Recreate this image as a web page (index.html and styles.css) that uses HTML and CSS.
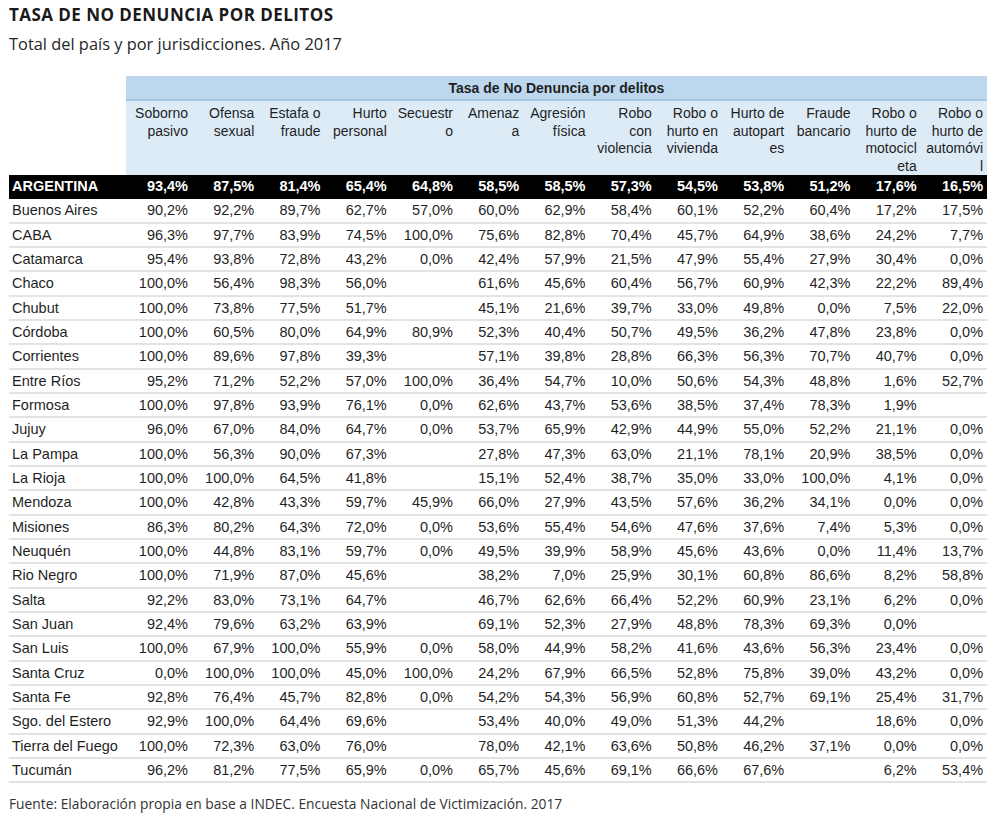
FILE: index.html
```html
<!DOCTYPE html>
<html lang="es">
<head>
<meta charset="utf-8">
<title>Tasa de no denuncia por delitos</title>
<link rel="stylesheet" href="styles.css">
</head>
<body>
<div class="page">
  <h1 class="title">TASA DE NO DENUNCIA POR DELITOS</h1>
  <p class="subtitle">Total del país y por jurisdicciones. Año 2017</p>
  <table class="data">
    <colgroup>
      <col class="c-label">
      <col class="c-num"><col class="c-num"><col class="c-num"><col class="c-num"><col class="c-num">
      <col class="c-num"><col class="c-num"><col class="c-num"><col class="c-num"><col class="c-num">
      <col class="c-num"><col class="c-num"><col class="c-num">
    </colgroup>
    <thead>
      <tr class="band">
        <th class="blank"></th>
        <th colspan="13" class="band-title">Tasa de No Denuncia por delitos</th>
      </tr>
      <tr class="cols">
        <th class="blank"></th>
        <th>Soborno<br>pasivo</th>
        <th>Ofensa<br>sexual</th>
        <th>Estafa o<br>fraude</th>
        <th>Hurto<br>personal</th>
        <th>Secuestr<br>o</th>
        <th>Amenaz<br>a</th>
        <th>Agresión<br>física</th>
        <th>Robo<br>con<br>violencia</th>
        <th>Robo o<br>hurto en<br>vivienda</th>
        <th>Hurto de<br>autopart<br>es</th>
        <th>Fraude<br>bancario</th>
        <th>Robo o<br>hurto de<br>motocicl<br>eta</th>
        <th>Robo o<br>hurto de<br>automóvi<br>l</th>
      </tr>
    </thead>
    <tbody>
      <tr class="total"><td>ARGENTINA</td><td>93,4%</td><td>87,5%</td><td>81,4%</td><td>65,4%</td><td>64,8%</td><td>58,5%</td><td>58,5%</td><td>57,3%</td><td>54,5%</td><td>53,8%</td><td>51,2%</td><td>17,6%</td><td>16,5%</td></tr>
      <tr><td>Buenos Aires</td><td>90,2%</td><td>92,2%</td><td>89,7%</td><td>62,7%</td><td>57,0%</td><td>60,0%</td><td>62,9%</td><td>58,4%</td><td>60,1%</td><td>52,2%</td><td>60,4%</td><td>17,2%</td><td>17,5%</td></tr>
      <tr><td>CABA</td><td>96,3%</td><td>97,7%</td><td>83,9%</td><td>74,5%</td><td>100,0%</td><td>75,6%</td><td>82,8%</td><td>70,4%</td><td>45,7%</td><td>64,9%</td><td>38,6%</td><td>24,2%</td><td>7,7%</td></tr>
      <tr><td>Catamarca</td><td>95,4%</td><td>93,8%</td><td>72,8%</td><td>43,2%</td><td>0,0%</td><td>42,4%</td><td>57,9%</td><td>21,5%</td><td>47,9%</td><td>55,4%</td><td>27,9%</td><td>30,4%</td><td>0,0%</td></tr>
      <tr><td>Chaco</td><td>100,0%</td><td>56,4%</td><td>98,3%</td><td>56,0%</td><td></td><td>61,6%</td><td>45,6%</td><td>60,4%</td><td>56,7%</td><td>60,9%</td><td>42,3%</td><td>22,2%</td><td>89,4%</td></tr>
      <tr><td>Chubut</td><td>100,0%</td><td>73,8%</td><td>77,5%</td><td>51,7%</td><td></td><td>45,1%</td><td>21,6%</td><td>39,7%</td><td>33,0%</td><td>49,8%</td><td>0,0%</td><td>7,5%</td><td>22,0%</td></tr>
      <tr><td>Córdoba</td><td>100,0%</td><td>60,5%</td><td>80,0%</td><td>64,9%</td><td>80,9%</td><td>52,3%</td><td>40,4%</td><td>50,7%</td><td>49,5%</td><td>36,2%</td><td>47,8%</td><td>23,8%</td><td>0,0%</td></tr>
      <tr><td>Corrientes</td><td>100,0%</td><td>89,6%</td><td>97,8%</td><td>39,3%</td><td></td><td>57,1%</td><td>39,8%</td><td>28,8%</td><td>66,3%</td><td>56,3%</td><td>70,7%</td><td>40,7%</td><td>0,0%</td></tr>
      <tr><td>Entre Ríos</td><td>95,2%</td><td>71,2%</td><td>52,2%</td><td>57,0%</td><td>100,0%</td><td>36,4%</td><td>54,7%</td><td>10,0%</td><td>50,6%</td><td>54,3%</td><td>48,8%</td><td>1,6%</td><td>52,7%</td></tr>
      <tr><td>Formosa</td><td>100,0%</td><td>97,8%</td><td>93,9%</td><td>76,1%</td><td>0,0%</td><td>62,6%</td><td>43,7%</td><td>53,6%</td><td>38,5%</td><td>37,4%</td><td>78,3%</td><td>1,9%</td><td></td></tr>
      <tr><td>Jujuy</td><td>96,0%</td><td>67,0%</td><td>84,0%</td><td>64,7%</td><td>0,0%</td><td>53,7%</td><td>65,9%</td><td>42,9%</td><td>44,9%</td><td>55,0%</td><td>52,2%</td><td>21,1%</td><td>0,0%</td></tr>
      <tr><td>La Pampa</td><td>100,0%</td><td>56,3%</td><td>90,0%</td><td>67,3%</td><td></td><td>27,8%</td><td>47,3%</td><td>63,0%</td><td>21,1%</td><td>78,1%</td><td>20,9%</td><td>38,5%</td><td>0,0%</td></tr>
      <tr><td>La Rioja</td><td>100,0%</td><td>100,0%</td><td>64,5%</td><td>41,8%</td><td></td><td>15,1%</td><td>52,4%</td><td>38,7%</td><td>35,0%</td><td>33,0%</td><td>100,0%</td><td>4,1%</td><td>0,0%</td></tr>
      <tr><td>Mendoza</td><td>100,0%</td><td>42,8%</td><td>43,3%</td><td>59,7%</td><td>45,9%</td><td>66,0%</td><td>27,9%</td><td>43,5%</td><td>57,6%</td><td>36,2%</td><td>34,1%</td><td>0,0%</td><td>0,0%</td></tr>
      <tr><td>Misiones</td><td>86,3%</td><td>80,2%</td><td>64,3%</td><td>72,0%</td><td>0,0%</td><td>53,6%</td><td>55,4%</td><td>54,6%</td><td>47,6%</td><td>37,6%</td><td>7,4%</td><td>5,3%</td><td>0,0%</td></tr>
      <tr><td>Neuquén</td><td>100,0%</td><td>44,8%</td><td>83,1%</td><td>59,7%</td><td>0,0%</td><td>49,5%</td><td>39,9%</td><td>58,9%</td><td>45,6%</td><td>43,6%</td><td>0,0%</td><td>11,4%</td><td>13,7%</td></tr>
      <tr><td>Rio Negro</td><td>100,0%</td><td>71,9%</td><td>87,0%</td><td>45,6%</td><td></td><td>38,2%</td><td>7,0%</td><td>25,9%</td><td>30,1%</td><td>60,8%</td><td>86,6%</td><td>8,2%</td><td>58,8%</td></tr>
      <tr><td>Salta</td><td>92,2%</td><td>83,0%</td><td>73,1%</td><td>64,7%</td><td></td><td>46,7%</td><td>62,6%</td><td>66,4%</td><td>52,2%</td><td>60,9%</td><td>23,1%</td><td>6,2%</td><td>0,0%</td></tr>
      <tr><td>San Juan</td><td>92,4%</td><td>79,6%</td><td>63,2%</td><td>63,9%</td><td></td><td>69,1%</td><td>52,3%</td><td>27,9%</td><td>48,8%</td><td>78,3%</td><td>69,3%</td><td>0,0%</td><td></td></tr>
      <tr><td>San Luis</td><td>100,0%</td><td>67,9%</td><td>100,0%</td><td>55,9%</td><td>0,0%</td><td>58,0%</td><td>44,9%</td><td>58,2%</td><td>41,6%</td><td>43,6%</td><td>56,3%</td><td>23,4%</td><td>0,0%</td></tr>
      <tr><td>Santa Cruz</td><td>0,0%</td><td>100,0%</td><td>100,0%</td><td>45,0%</td><td>100,0%</td><td>24,2%</td><td>67,9%</td><td>66,5%</td><td>52,8%</td><td>75,8%</td><td>39,0%</td><td>43,2%</td><td>0,0%</td></tr>
      <tr><td>Santa Fe</td><td>92,8%</td><td>76,4%</td><td>45,7%</td><td>82,8%</td><td>0,0%</td><td>54,2%</td><td>54,3%</td><td>56,9%</td><td>60,8%</td><td>52,7%</td><td>69,1%</td><td>25,4%</td><td>31,7%</td></tr>
      <tr><td>Sgo. del Estero</td><td>92,9%</td><td>100,0%</td><td>64,4%</td><td>69,6%</td><td></td><td>53,4%</td><td>40,0%</td><td>49,0%</td><td>51,3%</td><td>44,2%</td><td></td><td>18,6%</td><td>0,0%</td></tr>
      <tr><td>Tierra del Fuego</td><td>100,0%</td><td>72,3%</td><td>63,0%</td><td>76,0%</td><td></td><td>78,0%</td><td>42,1%</td><td>63,6%</td><td>50,8%</td><td>46,2%</td><td>37,1%</td><td>0,0%</td><td>0,0%</td></tr>
      <tr><td>Tucumán</td><td>96,2%</td><td>81,2%</td><td>77,5%</td><td>65,9%</td><td>0,0%</td><td>65,7%</td><td>45,6%</td><td>69,1%</td><td>66,6%</td><td>67,6%</td><td></td><td>6,2%</td><td>53,4%</td></tr>
    </tbody>
  </table>
  <p class="source">Fuente: Elaboración propia en base a INDEC. Encuesta Nacional de Victimización. 2017</p>
</div>
</body>
</html>
```

FILE: styles.css
```css
html, body {
  margin: 0;
  padding: 0;
  background: #ffffff;
}

.page {
  padding: 5px 0 0 9px;
  width: 978px;
}

.title {
  margin: 0;
  font-family: "Open Sans", "Liberation Sans", sans-serif;
  font-weight: 700;
  font-size: 17px;
  letter-spacing: 0.45px;
  line-height: 20px;
  color: #1a1a1a;
}

.subtitle {
  margin: 8px 0 0 0;
  font-family: "Open Sans", "Liberation Sans", sans-serif;
  font-size: 16.4px;
  line-height: 22px;
  color: #262626;
}

.data {
  margin-top: 21px;
  width: 978px;
  table-layout: fixed;
  border-collapse: separate;
  border-spacing: 0;
  font-family: "Liberation Sans", Arial, sans-serif;
  color: #1f1f1f;
}

.c-label { width: 116.75px; }
.c-num { width: 66.25px; }

.data th {
  font-weight: 400;
  font-size: 14px;
  padding: 0 4px 0 0;
  text-align: right;
}

.data th.blank {
  background: #ffffff;
}

.band th.band-title {
  background: #bdd7ee;
  font-weight: 700;
  text-align: center;
  height: 25px;
  box-sizing: border-box;
  border-bottom: 2px solid #a6c8e8;
  line-height: 18px;
  padding: 0;
}

.band th.blank {
  border-bottom: 2px solid #ffffff;
}

.cols th {
  background: #ddebf7;
  vertical-align: top;
  line-height: 17.5px;
  height: 72px;
  box-sizing: border-box;
  padding-top: 4px;
}

.data td {
  font-size: 14.5px;
  height: 24.33px;
  box-sizing: border-box;
  padding: 0 4px 0 0;
  text-align: right;
  white-space: nowrap;
  border-bottom: 2px solid #e3e3e3;
  line-height: 18px;
}

.data td:first-child {
  text-align: left;
  padding: 0 0 0 3px;
}

.total td {
  background: #000000;
  color: #ffffff;
  font-weight: 700;
  border-bottom-color: #000000;
}

.source {
  margin: 11px 0 0 0;
  font-family: "Open Sans", "Liberation Sans", sans-serif;
  font-size: 13.8px;
  line-height: 19px;
  color: #333333;
}
```
